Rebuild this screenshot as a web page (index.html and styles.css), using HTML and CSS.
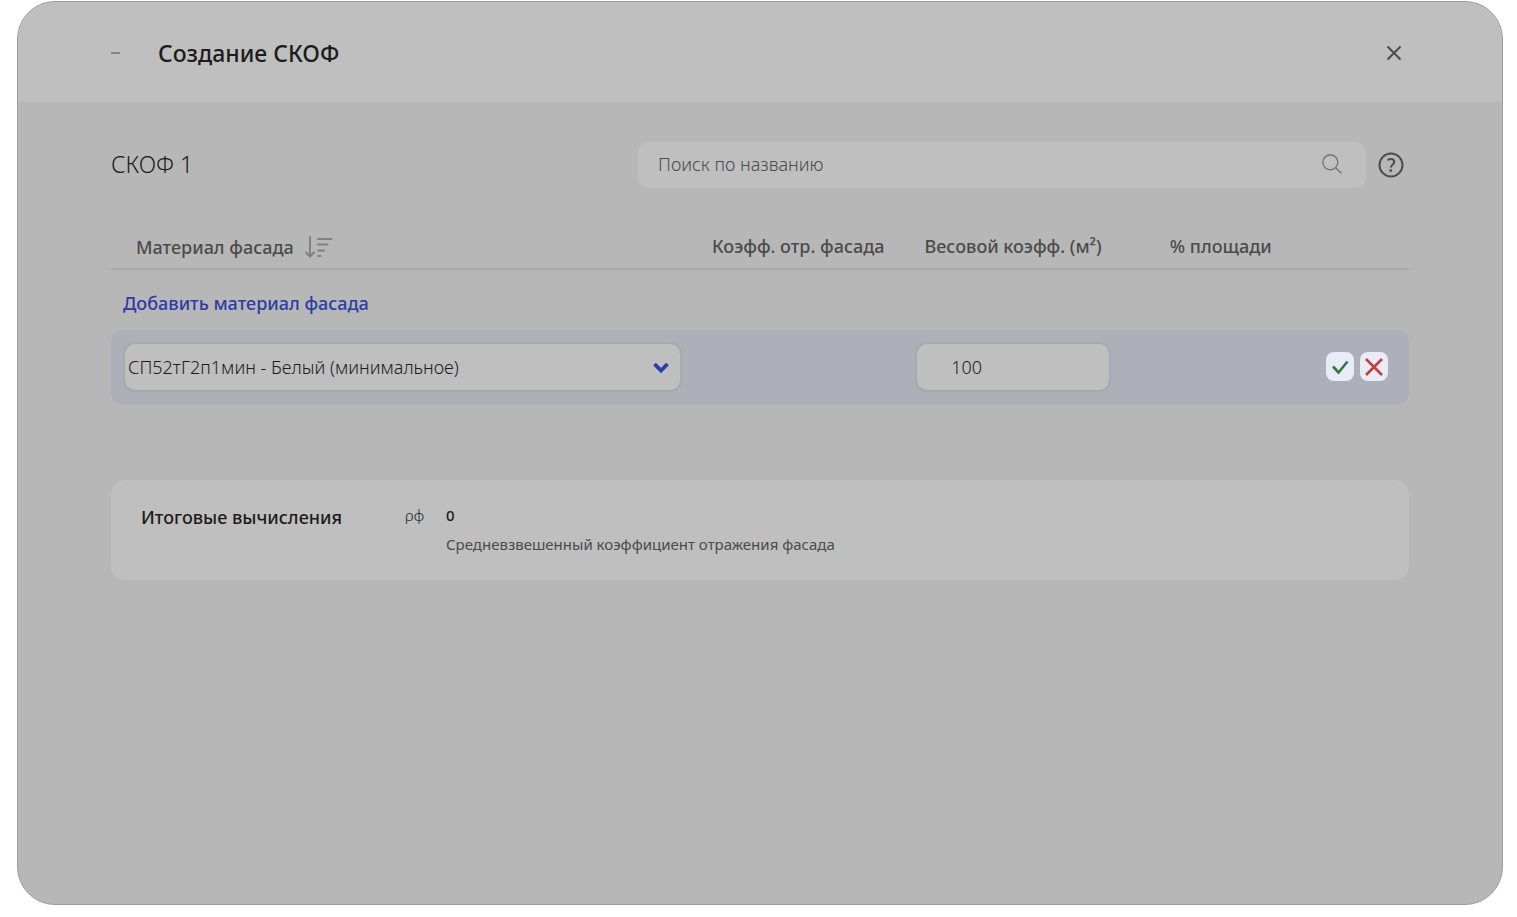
FILE: index.html
```html
<!DOCTYPE html>
<html lang="ru">
<head>
<meta charset="utf-8">
<title>Создание СКОФ</title>
<link rel="stylesheet" href="styles.css">
</head>
<body>
<main class="dialog">
  <header class="dialog-header">
    <span class="dash"></span>
    <h1 class="title">Создание СКОФ</h1>
    <button class="icon-button close" aria-label="Закрыть">
      <svg width="16" height="16" viewBox="0 0 16 16"><path d="M1.500 1.500 14.500 14.500M14.500 1.500 1.500 14.500" fill="none" stroke="#4b4b4b" stroke-width="2"/></svg>
    </button>
  </header>
  <div class="dialog-body">
    <div class="toolbar">
      <h2 class="name">СКОФ 1</h2>
      <label class="search">
        <input class="search-input" type="text" placeholder="Поиск по названию" aria-label="Поиск по названию">
        <svg width="20" height="20" viewBox="0 0 20 20"><g fill="none" stroke="#6b6b6b" stroke-width="1.200"><circle cx="8.300" cy="8.300" r="7.500"/><path d="M13.600 13.600 19.300 19.200"/></g></svg>
      </label>
      <button class="icon-button" aria-label="Справка">
        <svg width="26" height="26" viewBox="0 0 26 26"><g fill="none" stroke="#4b4b4b" stroke-width="2"><circle cx="13" cy="13" r="11.500"/><path d="M9.500 8.100C12.600 6.300 16.300 7 16.300 9.800C16.300 12.400 12.900 12.500 12.900 15.600"/></g><circle cx="12.800" cy="18.600" r="1.400" fill="#4b4b4b"/></svg>
      </button>
    </div>
    <table class="materials">
      <colgroup><col class="col-material"><col class="col-reflect"><col class="col-weight"><col class="col-area"><col class="col-actions"></colgroup>
      <thead>
        <tr>
          <th class="first"><div class="sortable">Материал фасада
            <svg width="28" height="22" viewBox="0 0 28 22"><path d="M5 1V20M1 16.500 5 20.500 9 16.500M13 3H26.500M13 8.500H22.500M13 14.500H19M13 20H15.500" fill="none" stroke="#818181" stroke-width="2" stroke-linecap="round" stroke-linejoin="round"/></svg>
          </div></th>
          <th>Коэфф. отр. фасада</th>
          <th>Весовой коэфф. (м²)</th>
          <th>% площади</th>
          <td></td>
        </tr>
      </thead>
      <tbody>
        <tr class="add-row"><td colspan="5"><button class="add">Добавить материал фасада</button></td></tr>
        <tr class="edit-row">
          <td>
            <div class="select-wrap">
              <select class="field select" aria-label="Материал фасада"><option>СП52тГ2п1мин - Белый (минимальное)</option></select>
              <svg class="chevron" width="16" height="12" viewBox="0 0 16 12"><path d="M1.500 2 8 8.500 14.500 2" fill="none" stroke="#2b3da6" stroke-width="3.800"/></svg>
            </div>
          </td>
          <td></td>
          <td><input class="field weight" type="text" value="100" aria-label="Весовой коэффициент"></td>
          <td></td>
          <td>
            <div class="actions">
              <button class="action" aria-label="Сохранить"><svg width="18" height="18" viewBox="0 0 18 18"><path d="M2 8.500 7.500 14.500 16.500 3.500" fill="none" stroke="#34783f" stroke-width="2.600"/></svg></button>
              <button class="action" aria-label="Отменить"><svg width="18" height="18" viewBox="0 0 18 18"><path d="M1 1 17 17M17 1 1 17" fill="none" stroke="#c43c3c" stroke-width="2.600"/></svg></button>
            </div>
          </td>
        </tr>
      </tbody>
    </table>
    <section class="summary">
      <h3 class="summary-title">Итоговые вычисления</h3>
      <span class="symbol">ρф</span>
      <div class="result">
        <span class="value">0</span>
        <span class="note">Средневзвешенный коэффициент отражения фасада</span>
      </div>
    </section>
  </div>
</main>
</body>
</html>
```
FILE: styles.css
```css
* {
  box-sizing: border-box;
}

body {
  margin: 0;
  min-height: 100vh;
  padding: 1px 14px 12px 17px;
  display: flex;
  background: #fff;
  color: #1c1c1c;
  font-family: "Noto Sans", "Open Sans", sans-serif;
  font-size: 18px;
}

button,
input,
select {
  font: inherit;
  color: inherit;
}

button {
  padding: 0;
  border: 0;
  background: none;
  cursor: pointer;
}

svg {
  display: block;
  flex: none;
}

.dialog {
  flex: 1;
  min-width: 0;
  border: 1px solid #9d9d9d;
  border-radius: 38px;
  background: #b7b7b7;
  overflow: hidden;
}

.dialog-header {
  display: flex;
  align-items: center;
  height: 100px;
  padding: 2px 100px 0 93px;
  background: #bfbfbf;
}

.dash {
  width: 9px;
  height: 2px;
  margin-right: 38px;
  background: #858585;
}

.title,
.materials th,
.add,
.summary-title,
.value {
  font-weight: 500;
}

.title {
  flex: 1;
  margin: 0;
  font-size: 23px;
}

.dialog-body {
  padding: 40px 93px;
}

.toolbar {
  display: flex;
  align-items: center;
  height: 46px;
  padding-right: 5px;
}

.name {
  flex: 1;
  margin: 0;
  padding-bottom: 2px;
  font-size: 23px;
  font-weight: 350;
}

.search {
  display: flex;
  align-items: center;
  width: 56.3%;
  height: 46px;
  margin-right: 12px;
  padding: 0 24px 2px 20px;
  border-radius: 10px;
  background: #bfbfbf;
}

.search-input {
  flex: 1;
  min-width: 0;
  padding: 0;
  border: 0;
  outline: 0;
  background: none;
  font-weight: 350;
}

.search-input::placeholder {
  color: #4b4b4b;
  opacity: 1;
}

.materials {
  width: 100%;
  margin-top: 36px;
  border-spacing: 0;
  table-layout: fixed;
}

.materials th,
.materials td {
  padding: 0;
}

.col-material {
  width: 44.6%;
}

.col-reflect {
  width: 16.7%;
}

.col-weight {
  width: 16.4%;
}

.col-area {
  width: 15.6%;
}

.materials thead th,
.materials thead td {
  height: 46px;
  border-bottom: 2px solid #a9a9a9;
  color: #4b4b4b;
  white-space: nowrap;
}

.materials th.first {
  padding: 2px 0 0 25px;
}

.sortable {
  display: flex;
  align-items: center;
  gap: 11px;
}

.add-row td {
  height: 60px;
  padding: 6px 12px 0;
}

.add {
  color: #2b3da6;
}

.edit-row td {
  height: 75px;
  padding-bottom: 2px;
  background: #adb0b9;
}

.edit-row td:first-child {
  padding-left: 12px;
  border-radius: 12px 0 0 12px;
}

.edit-row td:last-child {
  padding-right: 21px;
  border-radius: 0 12px 12px 0;
}

.field {
  display: block;
  height: 50px;
  border: 2px solid #a9a9a9;
  border-radius: 12px;
  background: #bfbfbf;
  font-weight: 350;
}

.select-wrap {
  position: relative;
  margin-right: 8px;
}

.select {
  width: 100%;
  padding: 0 40px 0 3px;
  appearance: none;
}

.chevron {
  position: absolute;
  top: 20px;
  right: 13px;
  pointer-events: none;
}

.weight {
  width: 92%;
  margin: 0 auto;
  padding: 0 34px;
}

.actions {
  display: flex;
  justify-content: flex-end;
  gap: 6px;
}

.action {
  display: flex;
  align-items: center;
  justify-content: center;
  flex: none;
  width: 28px;
  height: 29px;
  border-radius: 8px;
  background: #e9ebf8;
}

.summary {
  display: flex;
  align-items: flex-start;
  min-height: 100px;
  margin-top: 75px;
  padding: 25px 30px;
  border-radius: 14px;
  background: #bfbfbf;
}

.summary-title {
  width: 264px;
  margin: 0;
  font-size: 18px;
}

.symbol {
  width: 41px;
  font-size: 15px;
  font-weight: 350;
}

.result {
  display: flex;
  flex-direction: column;
  gap: 9px;
  font-size: 15px;
}

.note {
  color: #4b4b4b;
}
```
